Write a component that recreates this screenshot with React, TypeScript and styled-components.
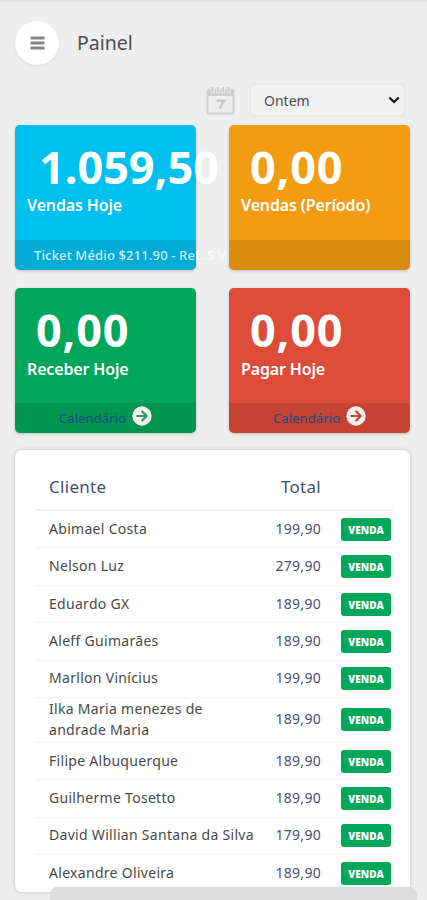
import React from "react";
import styled, { createGlobalStyle } from "styled-components";

const GlobalStyle = createGlobalStyle`
  * {
    box-sizing: border-box;
  }
  html, body, #root {
    height: 100%;
  }
  body {
    margin: 0;
    overflow: hidden;
    background-color: #eeeeee;
    font-family: "Noto Sans", "Open Sans", sans-serif;
  }
`;

const Page = styled.div`
  position: relative;
  width: 427px;
  height: 900px;
  padding: 0 17px 0 15px;
  border-top: 2px solid #e2e2e2;
  overflow: hidden;
`;

const Header = styled.header`
  display: flex;
  align-items: center;
  height: 82px;
`;

const MenuButton = styled.button`
  display: flex;
  align-items: center;
  justify-content: center;
  width: 44px;
  height: 44px;
  padding: 0;
  border: 0;
  border-radius: 50%;
  background-color: white;
  box-shadow: 0 1px 3px rgba(0, 0, 0, 0.08);
`;

const Title = styled.h1`
  margin: 0 0 0 18px;
  color: #4d4d4d;
  font-size: 19.5px;
  font-weight: 400;
  line-height: 26px;
`;

const FilterBar = styled.div`
  display: flex;
  justify-content: flex-end;
  align-items: center;
  gap: 14px;
  height: 32px;
  padding-right: 4px;
`;

const PeriodSelect = styled.div`
  display: flex;
  align-items: center;
  justify-content: space-between;
  width: 157px;
  height: 34px;
  padding: 0 4px 0 13px;
  border: 2px solid #e8e8e8;
  border-radius: 5px;
  background-color: #f0f0f0;
  color: #4d4d4d;
  font-size: 14px;
`;

const Cards = styled.div`
  display: grid;
  grid-template-columns: 181px 181px;
  column-gap: 33px;
  row-gap: 18px;
  margin-top: 9px;
`;

const Card = styled.section<{ $color: string }>`
  display: flex;
  flex-direction: column;
  height: 145px;
  min-width: 0;
  border-radius: 5px;
  background-color: ${(props) => props.$color};
  color: white;
  box-shadow: 0 1px 3px rgba(0, 0, 0, 0.2);
`;

const CardValue = styled.div<{ $long?: boolean }>`
  height: 66px;
  padding: 10px 0 0 ${(props) => (props.$long ? 24 : 21)}px;
  font-size: 45px;
  font-weight: 700;
  line-height: 63px;
  letter-spacing: ${(props) => (props.$long ? 0 : 0.8)}px;
  white-space: nowrap;
`;

const CardLabel = styled.div<{ $top: number }>`
  flex: 1;
  padding: ${(props) => props.$top}px 0 0 12px;
  font-size: 16px;
  font-weight: 600;
  line-height: 26px;
  letter-spacing: -0.15px;
  white-space: nowrap;
`;

const CardFooter = styled.div<{ $link?: boolean }>`
  display: flex;
  align-items: center;
  gap: 6px;
  height: 30px;
  padding-left: ${(props) => (props.$link ? 44 : 19)}px;
  border-radius: 0 0 5px 5px;
  background-color: rgba(0, 0, 0, 0.1);
  color: rgba(255, 255, 255, 0.82);
  font-size: 13px;
  font-weight: 500;
  letter-spacing: 0.15px;
  white-space: nowrap;
`;

const CalendarLink = styled.a`
  color: #1c4a86;
  font-size: 13px;
  font-weight: 400;
  letter-spacing: 0.1px;
`;

const Panel = styled.section`
  height: 442px;
  width: 395px;
  margin-top: 17px;
  padding: 14px 17px 0 20px;
  border-radius: 7px;
  background-color: white;
  box-shadow: 0 0 4px rgba(0, 0, 0, 0.2);
`;

const Row = styled.div<{ $tall?: boolean }>`
  display: grid;
  grid-template-columns: 1fr 60px 70px;
  align-items: center;
  height: ${(props) => (props.$tall ? 44.6 : 37.45)}px;
  padding: 0 2px 1px 14px;
  border-bottom: 1px solid #f2f2f2;
  &:last-child {
    border-bottom: 0;
  }
`;

const HeadRow = styled(Row)`
  height: 47px;
  padding-bottom: 0;
  border-bottom: 2px solid #f0f0f0;
  color: #45506b;
  font-size: 17px;
  letter-spacing: 0.3px;
`;

const Client = styled.span`
  margin-top: -1px;
  color: #484848;
  font-size: 14px;
  line-height: 21px;
  letter-spacing: 0.3px;
  white-space: pre;
`;

const Total = styled.span`
  margin-top: -1px;
  color: #48507a;
  font-size: 14px;
  letter-spacing: 0.3px;
  text-align: right;
`;

const HeadTotal = styled.span`
  text-align: right;
`;

const SaleButton = styled.button`
  justify-self: end;
  width: 50px;
  height: 23px;
  margin-top: 1px;
  padding: 1px 0 0;
  border: 0;
  border-radius: 3px;
  background-color: #00a65a;
  color: white;
  font-family: inherit;
  font-size: 10px;
  font-weight: 900;
  line-height: 20px;
  letter-spacing: 0.1px;
`;

const BottomSheet = styled.div`
  position: absolute;
  left: 50px;
  bottom: 0;
  width: 367px;
  height: 13px;
  border-radius: 7px 7px 0 0;
  background-color: #dcdcdc;
`;

const sales = [
  { client: "Abimael Costa", total: "199,90" },
  { client: "Nelson Luz", total: "279,90" },
  { client: "Eduardo GX", total: "189,90" },
  { client: "Aleff Guimarães", total: "189,90" },
  { client: "Marllon Vinícius", total: "199,90" },
  { client: "Ilka Maria menezes de\nandrade Maria", total: "189,90", tall: true },
  { client: "Filipe Albuquerque", total: "189,90" },
  { client: "Guilherme Tosetto", total: "189,90" },
  { client: "David Willian Santana da Silva", total: "179,90" },
  { client: "Alexandre Oliveira", total: "189,90" },
];

function MenuIcon() {
  return (
    <svg width="15" height="14" viewBox="0 0 15 14">
      <path d="M0.5 2h14M0.5 7h14M0.5 12h14" stroke="#858585" strokeWidth="2.8" />
    </svg>
  );
}

function CalendarIcon() {
  return (
    <svg width="29" height="29" viewBox="0 0 29 29" fill="none">
      <rect x="1.5" y="4" width="26" height="23.5" rx="1.5" stroke="#cfcfcf" strokeWidth="2" />
      <path d="M2 4h25v6H2z" fill="#cfcfcf" />
      <path d="M6.5 1v6M11.8 1v6M17.2 1v6M22.5 1v6" stroke="#eeeeee" strokeWidth="3.6" />
      <path d="M6.5 1v5M11.8 1v5M17.2 1v5M22.5 1v5" stroke="#cacaca" strokeWidth="1.8" />
      <path d="M10.5 14.8h7.6c-2.4 2.5-3.5 4.8-3.8 8.2" stroke="#cacaca" strokeWidth="2.6" />
    </svg>
  );
}

function ChevronIcon() {
  return (
    <svg width="12" height="8" viewBox="0 0 12 8" fill="none">
      <path d="M1.3 1.5 6 6l4.7-4.5" stroke="#161616" strokeWidth="2.2" />
    </svg>
  );
}

const ArrowSvg = styled.svg`
  margin-bottom: 4px;
`;

function ArrowIcon({ color }: { color: string }) {
  return (
    <ArrowSvg width="20" height="20" viewBox="0 0 19 19" fill="none">
      <circle cx="9.5" cy="9.5" r="9.2" fill="#f3f1e9" />
      <path d="M4.2 9.5h9.2M9.2 4.8l4.7 4.7-4.7 4.7" stroke={color} strokeWidth="2.1" />
    </ArrowSvg>
  );
}

export default function App() {
  return (
    <>
      <GlobalStyle />
      <Page>
        <Header>
          <MenuButton aria-label="Menu">
            <MenuIcon />
          </MenuButton>
          <Title>Painel</Title>
        </Header>

        <FilterBar>
          <CalendarIcon />
          <PeriodSelect>
            Ontem
            <ChevronIcon />
          </PeriodSelect>
        </FilterBar>

        <Cards>
          <Card $color="#00c0ef">
            <CardValue $long>1.059,50</CardValue>
            <CardLabel $top={1}>Vendas Hoje</CardLabel>
            <CardFooter>Ticket Médio $211.90 - Ref. 5 V</CardFooter>
          </Card>
          <Card $color="#f39c12">
            <CardValue>0,00</CardValue>
            <CardLabel $top={1}>Vendas (Período)</CardLabel>
            <CardFooter />
          </Card>
          <Card $color="#00a65a">
            <CardValue>0,00</CardValue>
            <CardLabel $top={2}>Receber Hoje</CardLabel>
            <CardFooter $link>
              <CalendarLink>Calendário</CalendarLink>
              <ArrowIcon color="#2f9a68" />
            </CardFooter>
          </Card>
          <Card $color="#dd4b39">
            <CardValue>0,00</CardValue>
            <CardLabel $top={2}>Pagar Hoje</CardLabel>
            <CardFooter $link>
              <CalendarLink>Calendário</CalendarLink>
              <ArrowIcon color="#c24a3a" />
            </CardFooter>
          </Card>
        </Cards>

        <Panel>
          <HeadRow>
            <span>Cliente</span>
            <HeadTotal>Total</HeadTotal>
          </HeadRow>
          {sales.map((sale) => (
            <Row key={sale.client} $tall={sale.tall}>
              <Client>{sale.client}</Client>
              <Total>{sale.total}</Total>
              <SaleButton>VENDA</SaleButton>
            </Row>
          ))}
        </Panel>
        <BottomSheet />
      </Page>
    </>
  );
}
